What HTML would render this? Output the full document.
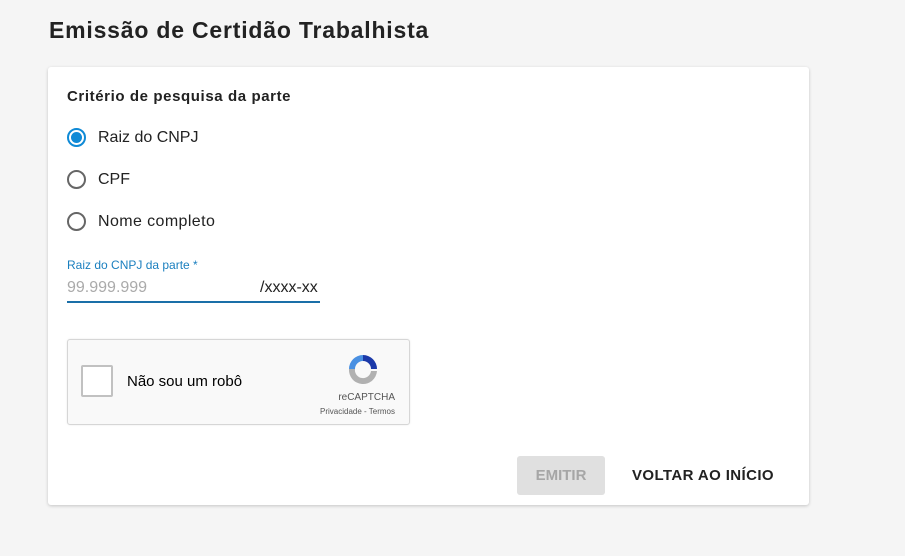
<!DOCTYPE html>
<html><head><style>
body{margin:0;width:905px;height:556px;background:#f5f5f5;font-family:"Liberation Sans",sans-serif;position:relative;overflow:hidden;color:#222}
.a{position:absolute}
h1{position:absolute;left:49px;top:17px;margin:0;font-size:23px;font-weight:bold;color:#222;letter-spacing:0.8px}
.card{left:48px;top:67px;width:761px;height:438px;background:#fff;border-radius:3px;box-shadow:0 1px 3px rgba(0,0,0,.2)}
.radio{width:19px;height:19px;border:2px solid #666;border-radius:50%;box-sizing:border-box}
.lbl{font-size:16px;color:#222}
</style></head><body>
<h1>Emissão de Certidão Trabalhista</h1>
<div class="a card"></div>
<div class="a" style="left:67px;top:88px;font-size:15px;font-weight:bold;letter-spacing:0.6px">Critério de pesquisa da parte</div>
<div class="a radio" style="left:67px;top:128px;border-color:#0f8ad6"><div style="width:11px;height:11px;margin:2px;border-radius:50%;background:#0f8ad6"></div></div>
<div class="a lbl" style="left:98px;top:129px">Raiz do CNPJ</div>
<div class="a radio" style="left:67px;top:170px"></div>
<div class="a lbl" style="left:98px;top:171px">CPF</div>
<div class="a radio" style="left:67px;top:212px"></div>
<div class="a lbl" style="left:98px;top:213px;letter-spacing:0.4px">Nome completo</div>
<div class="a" style="left:67px;top:258px;font-size:12px;color:#1a7fbf">Raiz do CNPJ da parte *</div>
<div class="a" style="left:67px;top:279px;font-size:16px;color:#aaa">99.999.999</div>
<div class="a" style="left:260px;top:279px;font-size:16px;color:#222">/xxxx-xx</div>
<div class="a" style="left:67px;top:301px;width:253px;height:2px;background:#1a6fa8"></div>
<div class="a" style="left:67px;top:339px;width:341px;height:84px;background:#f9f9f9;border:1px solid #d6d6d6;border-radius:3px;box-shadow:0 0 2px rgba(0,0,0,.08)"></div>
<div class="a" style="left:81px;top:365px;width:32px;height:32px;background:#fff;border:2px solid #c1c1c1;border-radius:2px;box-sizing:border-box"></div>
<div class="a" style="left:127px;top:373px;font-size:15px;color:#000">Não sou um robô</div>
<svg class="a" style="left:345px;top:351px" width="36" height="36" viewBox="0 0 36 36">
<path d="M18 4 A14 14 0 0 0 4 18 L10 18 A8 8 0 0 1 18 10Z" fill="#4a90e2"/>
<path d="M18 4 A14 14 0 0 1 32 18 L26 18 A8 8 0 0 0 18 10Z" fill="#1c3aa9"/>
<path d="M4 18 A14 14 0 0 0 32 20 L26 20 A8 8 0 0 1 10 18Z" fill="#b1b1b1"/>
</svg>
<div class="a" style="left:305px;top:392px;width:90px;text-align:right;font-size:10px;color:#555">reCAPTCHA</div>
<div class="a" style="left:290px;top:407px;width:105px;text-align:right;font-size:8px;color:#555">Privacidade - Termos</div>
<div class="a" style="left:517px;top:456px;width:88px;height:39px;background:#e0e0e0;border-radius:3px;color:#a6a6a6;font-size:15px;font-weight:bold;text-align:center;line-height:39px">EMITIR</div>
<div class="a" style="left:632px;top:467px;font-size:15px;font-weight:bold;color:#222;letter-spacing:0.4px">VOLTAR AO INÍCIO</div>
</body></html>
